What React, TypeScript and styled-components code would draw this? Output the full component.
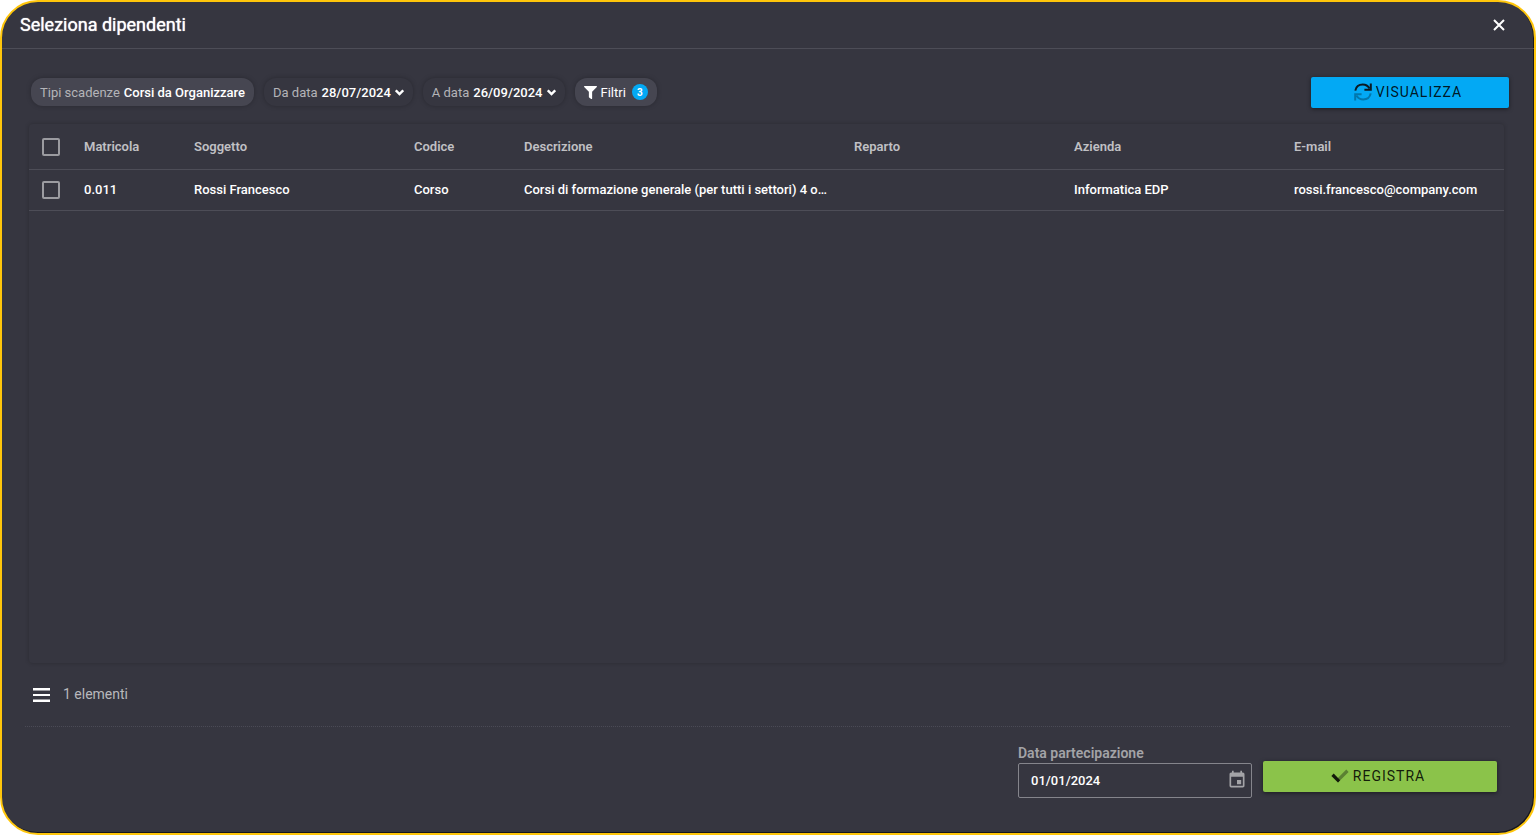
import React from "react";
import styled, { createGlobalStyle } from "styled-components";
import { FaFilter } from "react-icons/fa";
import { MdEvent } from "react-icons/md";

const GlobalStyle = createGlobalStyle`
  *, *::before, *::after { box-sizing: border-box; }
  body {
    margin: 0;
    background: #fff;
    color: #fff;
    font-family: Roboto, "Liberation Sans", sans-serif;
    font-size: 13px;
  }
  button, input { font: inherit; color: inherit; }
  svg { display: block; flex: none; }
`;

const Dialog = styled.main`
  display: flex;
  flex-direction: column;
  min-height: 100vh;
  background: #363640;
  border: 2px solid #ffc60b;
  border-radius: 38px;
  box-shadow: inset -1px -1px 0 #17171c;
`;

const Header = styled.header`
  display: flex;
  align-items: center;
  justify-content: space-between;
  height: 47px;
  padding: 0 29px 0 18px;
  border-bottom: 1px solid #4d4d57;
`;

const Title = styled.h1`
  margin: 0;
  font-size: 18px;
  line-height: 24px;
  font-weight: 400;
  text-shadow: 0 0 1px #fff;
`;

const IconButton = styled.button`
  display: flex;
  padding: 0;
  border: 0;
  background: none;
  color: ${(p) => p.color || "#fff"};
  cursor: pointer;
`;

const Toolbar = styled.div`
  display: flex;
  align-items: flex-start;
  justify-content: space-between;
  padding: 28px 25px 0 29px;
`;

const Filters = styled.div`
  display: flex;
  gap: 10px;
  padding-top: 1px;
`;

const Chip = styled.button<{ $filled?: boolean; $light?: boolean }>`
  display: flex;
  align-items: center;
  gap: 4px;
  height: 28px;
  padding: 0 9px;
  border: 0;
  border-radius: 12px;
  background: ${(p) => (p.$filled ? "#464651" : "#363640")};
  box-shadow: 0 0 5px rgba(0, 0, 0, 0.25);
  font-weight: ${(p) => (p.$light ? 400 : 500)};
  white-space: nowrap;
  cursor: pointer;
`;

const ChipLabel = styled.span`
  color: #b4b4b8;
  font-weight: 400;
`;

const Badge = styled.span`
  display: flex;
  align-items: center;
  justify-content: center;
  width: 16px;
  height: 16px;
  margin-left: 2px;
  border-radius: 50%;
  background: #03a9f4;
  font-size: 10px;
  font-weight: 700;
`;

const ActionButton = styled.button<{ $tone: string; $width: number }>`
  display: flex;
  align-items: center;
  justify-content: center;
  gap: 4px;
  width: ${(p) => p.$width}px;
  height: 31px;
  padding: 0 4px 1px 0;
  border: 0;
  border-radius: 2px;
  background: ${(p) => p.$tone};
  box-shadow: 0 1px 4px rgba(0, 0, 0, 0.5);
  color: rgba(0, 0, 0, 0.87);
  font-size: 14px;
  letter-spacing: 1px;
  cursor: pointer;
`;

const Panel = styled.section`
  flex: 1;
  margin: 16px 30px 0 27px;
  border-radius: 4px;
  box-shadow: 0 0 4px rgba(0, 0, 0, 0.22);
`;

const Table = styled.table`
  width: 100%;
  table-layout: fixed;
  border-collapse: separate;
  border-spacing: 0;
`;

const cell = `
  padding: 0 10px;
  border-bottom: 1px solid #4d4d57;
  text-align: left;
  white-space: nowrap;
  overflow: hidden;
  text-overflow: ellipsis;
`;

const Th = styled.th`
  ${cell}
  height: 46px;
  color: #c0c0c4;
  font-weight: 600;
`;

const Td = styled.td`
  ${cell}
  height: 41px;
  padding-bottom: 2px;
  font-weight: 500;
`;

const CheckTd = styled(Td)`
  padding-bottom: 0;
`;

const Checkbox = styled.input.attrs({ type: "checkbox" })`
  appearance: none;
  display: block;
  width: 18px;
  height: 18px;
  margin: 0 3px;
  border: 2px solid #9b9ba0;
  border-radius: 2px;
  cursor: pointer;
  &:checked { background: #03a9f4; }
`;

const StatusBar = styled.div`
  display: flex;
  align-items: center;
  gap: 13px;
  height: 64px;
  margin: 0 24px 0 23px;
  padding-left: 8px;
  border-bottom: 1px dotted #4b4b56;
  color: #b8b8bc;
  font-size: 14px;
`;

const Count = styled.span`
  padding-bottom: 2px;
`;

const Footer = styled.form`
  display: flex;
  justify-content: flex-end;
  align-items: flex-end;
  gap: 11px;
  padding: 17px 37px 35px;
`;

const Field = styled.div`
  display: flex;
  flex-direction: column;
  gap: 1px;
  width: 234px;
`;

const FieldLabel = styled.label`
  color: #a3a3a7;
  font-size: 14px;
  line-height: 18px;
  font-weight: 600;
`;

const DateBox = styled.div`
  display: flex;
  align-items: center;
  height: 35px;
  padding: 0 4px 2px 12px;
  border: 1px solid #85858c;
  border-radius: 2px;
`;

const DateInput = styled.input`
  flex: 1;
  min-width: 0;
  padding: 2px 0 0;
  border: 0;
  outline: 0;
  background: none;
  font-weight: 500;
`;

const RegisterSlot = styled.div`
  padding-bottom: 6px;
`;

const CloseIcon = () => (
  <svg width="12" height="12" viewBox="0 0 12 12" fill="none" stroke="#fff" strokeWidth="2" aria-hidden="true">
    <path d="M1 1L11 11M11 1L1 11" />
  </svg>
);

const ChevronIcon = () => (
  <svg width="9" height="7" viewBox="0 0 9 7" fill="none" stroke="#fff" strokeWidth="2.4" aria-hidden="true">
    <path d="M.8 1.3L4.5 5L8.2 1.3" />
  </svg>
);

const SyncIcon = () => (
  <svg width="18" height="18" viewBox="0 0 18 18" fill="none" strokeWidth="2" aria-hidden="true">
    <g stroke="#0c1a22">
      <path d="M1.3 7.6C2 4 5 1.6 8.8 1.6C11.6 1.6 14 3 15.6 5.6" />
      <path d="M16.8 .4V6.8H10.4" />
    </g>
    <g stroke="#0277ac">
      <path d="M16.7 10.4C16 14 13 16.4 9.2 16.4C6.4 16.4 4 15 2.4 12.4" />
      <path d="M1.2 17.6V11.2H7.6" />
    </g>
  </svg>
);

const CheckIcon = () => (
  <svg width="18" height="14" viewBox="0 0 18 14" aria-hidden="true">
    <path d="M15.3 .6L17.6 2.9L7 13.4L4.7 11L6.9 8.9Z" fill="#5b8132" />
    <path d="M.4 6.9L2.7 4.6L9.2 11.2L7 13.4Z" fill="#12190a" />
  </svg>
);

const MenuIcon = () => (
  <svg width="17" height="14" viewBox="0 0 17 14" fill="#fff" aria-hidden="true">
    <path d="M0 0h17v2.5H0zM0 6h17v2H0zM0 11.5h17V14H0z" />
  </svg>
);

const columns = [
  { name: "Matricola", width: 110 },
  { name: "Soggetto", width: 220 },
  { name: "Codice", width: 110 },
  { name: "Descrizione", width: 330 },
  { name: "Reparto", width: 220 },
  { name: "Azienda", width: 220 },
  { name: "E-mail", width: 220 },
];

const rows = [
  [
    "0.011",
    "Rossi Francesco",
    "Corso",
    "Corsi di formazione generale (per tutti i settori) 4 o…",
    "",
    "Informatica EDP",
    "rossi.francesco@company.com",
  ],
];

export default function App() {
  return (
    <>
      <GlobalStyle />
      <Dialog>
        <Header>
          <Title>Seleziona dipendenti</Title>
          <IconButton type="button" aria-label="Chiudi">
            <CloseIcon />
          </IconButton>
        </Header>

        <Toolbar>
          <Filters>
            <Chip type="button" $filled>
              <ChipLabel>Tipi scadenze</ChipLabel> Corsi da Organizzare
            </Chip>
            <Chip type="button">
              <ChipLabel>Da data</ChipLabel> 28/07/2024 <ChevronIcon />
            </Chip>
            <Chip type="button">
              <ChipLabel>A data</ChipLabel> 26/09/2024 <ChevronIcon />
            </Chip>
            <Chip type="button" $filled $light>
              <FaFilter size={13} /> Filtri <Badge>3</Badge>
            </Chip>
          </Filters>
          <ActionButton type="button" $tone="#03a9f4" $width={198}>
            <SyncIcon /> VISUALIZZA
          </ActionButton>
        </Toolbar>

        <Panel>
          <Table>
            <colgroup>
              <col width={45} />
              {columns.map((c) => (
                <col key={c.name} width={c.width} />
              ))}
            </colgroup>
            <thead>
              <tr>
                <Th><Checkbox aria-label="Seleziona tutti" /></Th>
                {columns.map((c) => (
                  <Th key={c.name} scope="col">{c.name}</Th>
                ))}
              </tr>
            </thead>
            <tbody>
              {rows.map((row) => (
                <tr key={row[0]}>
                  <CheckTd><Checkbox aria-label={`Seleziona ${row[1]}`} /></CheckTd>
                  {row.map((value, i) => (
                    <Td key={columns[i].name}>{value}</Td>
                  ))}
                </tr>
              ))}
            </tbody>
          </Table>
        </Panel>

        <StatusBar>
          <IconButton type="button" aria-label="Menu">
            <MenuIcon />
          </IconButton>
          <Count>1 elementi</Count>
        </StatusBar>

        <Footer onSubmit={(e) => e.preventDefault()}>
          <Field>
            <FieldLabel htmlFor="data-partecipazione">Data partecipazione</FieldLabel>
            <DateBox>
              <DateInput id="data-partecipazione" type="text" defaultValue="01/01/2024" />
              <IconButton type="button" color="#a3a3a7" aria-label="Apri calendario">
                <MdEvent size={20} />
              </IconButton>
            </DateBox>
          </Field>
          <RegisterSlot>
            <ActionButton type="submit" $tone="#8bc34a" $width={234}>
              <CheckIcon /> REGISTRA
            </ActionButton>
          </RegisterSlot>
        </Footer>
      </Dialog>
    </>
  );
}
